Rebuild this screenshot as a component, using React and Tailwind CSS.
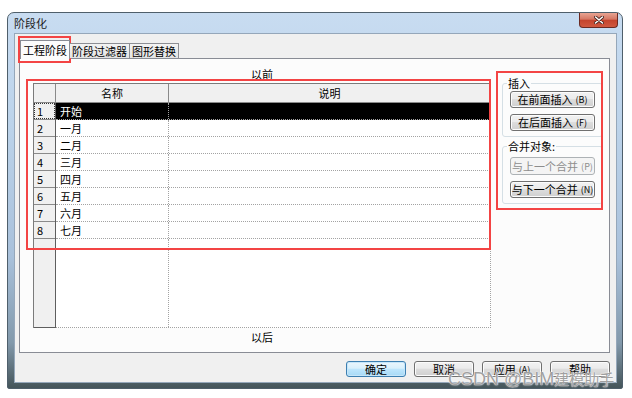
import React from 'react';

const rows = ['开始', '一月', '二月', '三月', '四月', '五月', '六月', '七月'];

const Btn = ({ children, mnemonic, focused, disabled, className = '' }) => {
  const look = focused
    ? 'border-[#3c7fb1] bg-[linear-gradient(180deg,#eaf6fd_0%,#d9f0fc_45%,#bee6fd_50%,#a7d9f5_100%)] shadow-[inset_0_0_0_1px_#c6e6fa]'
    : disabled
    ? 'border-[#adb2b5] bg-[#f4f4f4] text-[#8d8d8d]'
    : 'border-[#707070] bg-[linear-gradient(180deg,#f2f2f2_0%,#ebebeb_45%,#dddddd_50%,#cfcfcf_100%)] shadow-[inset_0_0_0_1px_#fcfcfc]';
  return (
    <div className={`flex items-center justify-center rounded-[3px] border text-[11px] leading-none ${look} ${className}`}>
      <span>{children}</span>
      {mnemonic && <span className="ml-[3px] text-[9px]">({mnemonic})</span>}
    </div>
  );
};

const Group = ({ label, children, className = '' }) => (
  <fieldset className={`rounded-[3px] border border-[#d5dfe5] ${className}`}>
    <legend className="ml-[4px] px-[1px] text-[11px] leading-[12px]">{label}</legend>
    <div className="flex flex-col px-[7px]">{children}</div>
  </fieldset>
);

export default function App() {
  return (
    <div className="relative h-[398px] w-[632px] overflow-hidden bg-white pl-[7px] pt-[12px] font-['Noto_Sans_CJK_SC','Noto_Sans',sans-serif] text-[11px] text-black">
      {/* window */}
      <div className="flex h-[377px] w-[616px] flex-col rounded-t-[7px] rounded-b-[2px] border border-[#4f5f6b] bg-[linear-gradient(180deg,#c8dcf1_0%,#bcd3ea_30%,#a9c1db_65%,#8299ab_88%,#45555a_100%)]">
        {/* title bar */}
        <div className="flex h-[20px] shrink-0 justify-between">
          <span className="pl-[6px] pt-[3px] leading-[14px] text-[#1b1b1b]">阶段化</span>
          <div className="mr-[4px] flex h-[15px] w-[39px] items-center justify-center rounded-b-[4px] border border-t-0 border-[#6b2a22] bg-[linear-gradient(180deg,#e8a493_0%,#d47764_45%,#c4432c_50%,#d0583f_100%)]">
            <svg width="10" height="8" viewBox="0 0 10 8">
              <path d="M1.5 1 L8.5 7 M8.5 1 L1.5 7" stroke="#47221c" strokeWidth="3.2" strokeLinecap="round" />
              <path d="M1.5 1 L8.5 7 M8.5 1 L1.5 7" stroke="#ffffff" strokeWidth="1.6" strokeLinecap="round" />
            </svg>
          </div>
        </div>

        {/* client area */}
        <div className="ml-[6px] mr-[5px] flex h-[350px] flex-col border border-[#95a7ba] bg-[#f0f0f0]">
          {/* tabs */}
          <div className="relative z-10 -mb-px flex h-[19px] items-end pl-[5px] pt-0 mt-[6px]">
            <div className="flex h-[19px] w-[50px] items-center justify-center border border-b-0 border-[#898c95] bg-[#fcfcfc]">
              工程阶段
            </div>
            <div className="-ml-px mb-px flex h-[15px] w-[61px] items-center justify-center border border-b-0 border-[#8c8e94] bg-[linear-gradient(180deg,#f3f3f3,#e3e3e3)]">
              阶段过滤器
            </div>
            <div className="-ml-px mb-px flex h-[15px] w-[50px] items-center justify-center border border-b-0 border-[#8c8e94] bg-[linear-gradient(180deg,#f3f3f3,#e3e3e3)]">
              图形替换
            </div>
          </div>

          {/* tab panel */}
          <div className="ml-[4px] mr-[6px] flex h-[295px] border border-[#898c95] bg-[#fcfcfc]">
            {/* grid column */}
            <div className="ml-[13px] flex w-[458px] flex-col">
              <div className="mt-[8px] text-center leading-[14px]">以前</div>
              <div className="mt-[2px] flex h-[245px] flex-col border-l border-t border-[#7b7b7b]">
                <div className="flex h-[19px] shrink-0">
                  <div className="w-[22px] border-b border-r border-[#8a8a8a] bg-[#f0f0f0]" />
                  <div className="flex w-[113px] items-center justify-center border-b border-r border-[#8a8a8a] bg-[#f0f0f0]">名称</div>
                  <div className="flex flex-1 items-center justify-center border-b border-r border-[#8a8a8a] bg-[#f0f0f0]">说明</div>
                </div>
                <div className="flex flex-1">
                  <div className="flex w-[22px] flex-col border-b border-r border-[#5e5e5e] bg-[#f0f0f0]">
                    {rows.map((r, i) => (
                      <div key={r} className="h-[17px] border-b border-[#8a8a8a] leading-none">
                        <div className={`flex h-full items-center pl-[2px] ${i === 0 ? 'border border-dotted border-[#333]' : 'pl-[3px]'}`}>
                          {i + 1}
                        </div>
                      </div>
                    ))}
                  </div>
                  <div className="flex flex-1 flex-col border-b border-r border-dotted border-[#a3a3a3] bg-white">
                    {rows.map((r, i) => (
                      <div
                        key={r}
                        className={`flex h-[17px] shrink-0 border-b border-dotted border-[#a3a3a3] ${i === 0 ? 'bg-black text-white' : ''}`}
                      >
                        <div className="flex w-[113px] items-center border-r border-dotted border-[#a3a3a3] pl-[4px]">{r}</div>
                        <div className="flex-1" />
                      </div>
                    ))}
                    <div className="flex flex-1">
                      <div className="w-[113px] border-r border-dotted border-[#a3a3a3]" />
                    </div>
                  </div>
                </div>
              </div>
              <div className="mt-[2px] text-center leading-[14px]">以后</div>
            </div>

            {/* right column */}
            <div className="ml-[11px] flex w-[101px] flex-col">
              <Group label="插入" className="mt-[18px] pb-[5px]">
                <Btn mnemonic="B" className="mt-[2px] h-[17px]">在前面插入</Btn>
                <Btn mnemonic="F" className="mt-[6px] h-[17px]">在后面插入</Btn>
              </Group>
              <Group label="合并对象:" className="mt-[3px] pb-[5px]">
                <Btn mnemonic="P" disabled className="mt-[5px] h-[18px]">与上一个合并</Btn>
                <Btn mnemonic="N" className="mt-[6px] h-[17px]">与下一个合并</Btn>
              </Group>
            </div>
          </div>

          {/* dialog buttons */}
          <div className="mr-[6px] mt-[8px] flex justify-end gap-2">
            <Btn focused className="h-[16px] w-[60px]">确定</Btn>
            <Btn className="h-[16px] w-[60px]">取消</Btn>
            <Btn mnemonic="A" className="h-[16px] w-[60px]">应用</Btn>
            <Btn className="h-[16px] w-[60px]">帮助</Btn>
          </div>
        </div>
      </div>

      {/* annotation boxes */}
      <div className="absolute left-[18px] top-[36px] h-[27px] w-[53px] border-2 border-[#f34444]" />
      <div className="absolute left-[26px] top-[79px] h-[171px] w-[465px] border-2 border-[#f34444]" />
      <div className="absolute left-[496px] top-[71px] h-[139px] w-[107px] border-2 border-[#f34444]" />

      {/* watermark */}
      <div className="absolute left-[448px] top-[366px] flex items-baseline whitespace-nowrap text-[#a0a0a0] [text-shadow:0_0_1px_#fff,0_0_2px_#fff]">
        <span className="font-['Liberation_Sans',sans-serif] text-[18px]">CSDN @BIM</span>
        <span className="text-[15px]">建模助手</span>
      </div>
    </div>
  );
}
